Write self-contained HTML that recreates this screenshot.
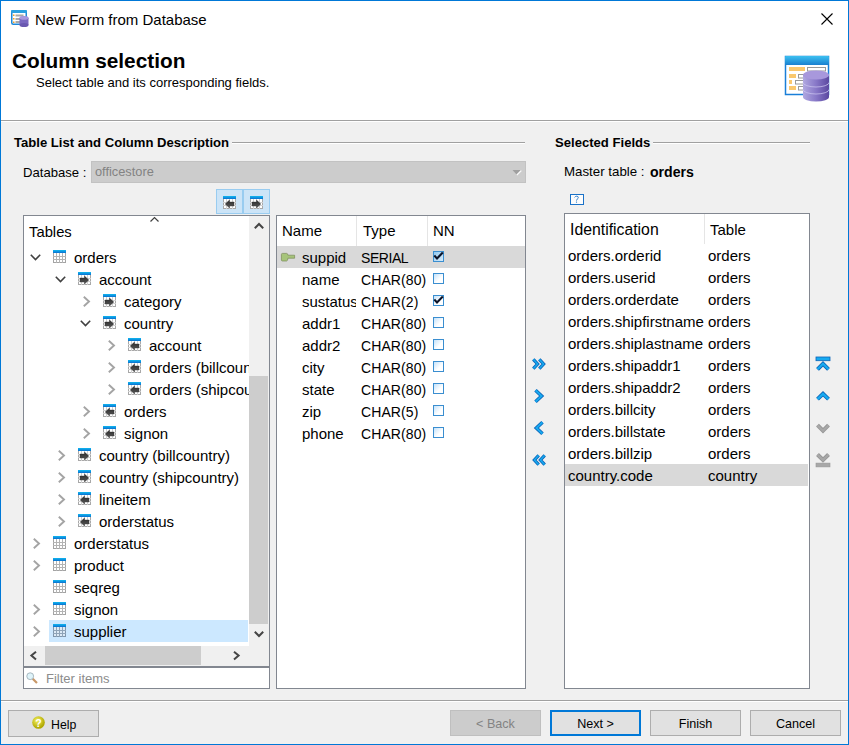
<!DOCTYPE html><html><head><meta charset="utf-8"><style>
*{box-sizing:border-box;margin:0;padding:0}
html,body{width:849px;height:745px;overflow:hidden;background:#f0f0f0}
body{position:relative;font-family:"Liberation Sans",sans-serif;color:#000}
.a{position:absolute}
.t{position:absolute;white-space:nowrap;line-height:1}
.box{position:absolute;background:#fff;border:1px solid #828790}
.btn{position:absolute;top:710px;width:91px;height:26px;background:#e1e1e1;border:1px solid #adadad;font-size:12.6px;text-align:center;line-height:26px}
.r{position:absolute;height:22px;font-size:15px;line-height:24px;white-space:nowrap}
svg{position:absolute;overflow:visible}
</style></head><body>
<svg style="left:0;top:0" width="1" height="1"><defs><linearGradient id="bbar" x1="0" y1="0" x2="0" y2="1"><stop offset="0" stop-color="#10b8f0"/><stop offset="1" stop-color="#0a70d0"/></linearGradient><linearGradient id="agr" x1="0" y1="0" x2="0" y2="1"><stop offset="0" stop-color="#2a2a2a"/><stop offset="1" stop-color="#5a5a5a"/></linearGradient></defs></svg>
<div class="a" style="left:0;top:0;width:849px;height:745px;border:1px solid #0078d7"></div>
<div class="a" style="left:1px;top:1px;width:847px;height:119px;background:#fff"></div>
<svg style="left:11px;top:10px" width="18" height="17" viewBox="0 0 18 17">
<rect x="0.75" y="0.75" width="14.5" height="13.5" rx="1.5" fill="#fff" stroke="#1e88d8" stroke-width="1.5"/>
<rect x="0" y="0" width="16" height="3" rx="1" fill="#2aa0e0"/>
<rect x="2" y="4.5" width="1.5" height="1.5" fill="#f0a020"/><rect x="2" y="8" width="1.5" height="1.5" fill="#f0a020"/><rect x="2" y="11.5" width="1.5" height="1.5" fill="#f0a020"/>
<rect x="4.5" y="4.5" width="8" height="2" fill="#a8a8a8"/><rect x="4.5" y="8" width="5" height="2" fill="#a8a8a8"/><rect x="4.5" y="11" width="5" height="2" fill="#a8a8a8"/>
<ellipse cx="13" cy="8" rx="4.5" ry="2" fill="#9a8ad8"/>
<rect x="8.5" y="8" width="9" height="7" fill="#7a68c0"/>
<ellipse cx="13" cy="15" rx="4.5" ry="2" fill="#6a58b0"/>
<ellipse cx="13" cy="8" rx="4.5" ry="1.8" fill="#a898e0"/>
</svg>
<div class="t" style="left:35px;top:12px;font-size:15px">New Form from Database</div>
<svg style="left:821px;top:13px" width="12" height="12"><path d="M0.5 0.5L11.5 11.5M11.5 0.5L0.5 11.5" stroke="#000" stroke-width="1.1"/></svg>
<div class="t" style="left:12px;top:51px;font-size:20.8px;font-weight:bold">Column selection</div>
<div class="t" style="left:36px;top:76px;font-size:13px">Select table and its corresponding fields.</div>
<svg style="left:785px;top:56px" width="46" height="46" viewBox="0 0 46 46">
<defs>
<linearGradient id="tb" x1="0" y1="0" x2="0" y2="1"><stop offset="0" stop-color="#3cc0f0"/><stop offset="1" stop-color="#1a80d0"/></linearGradient>
<linearGradient id="cyl" x1="0" y1="0" x2="1" y2="0"><stop offset="0" stop-color="#b0a8e0"/><stop offset="0.5" stop-color="#8878c8"/><stop offset="1" stop-color="#5a48a0"/></linearGradient>
</defs>
<rect x="0.5" y="0.5" width="43" height="38" fill="#fff" stroke="#1a7fd8" stroke-width="1.5"/>
<rect x="0" y="0" width="44" height="9" rx="1" fill="url(#tb)"/>
<rect x="4" y="11" width="16" height="4" fill="#f8b030" opacity="0.7"/>
<rect x="22.5" y="11.5" width="18" height="3.5" fill="#fff" stroke="#999"/>
<rect x="4" y="18" width="7" height="4" fill="#f8b030" opacity="0.7"/>
<rect x="13.5" y="18.5" width="8" height="3.5" fill="#fff" stroke="#999"/>
<rect x="4" y="24" width="3" height="4" fill="#f8b030" opacity="0.7"/>
<rect x="10.5" y="24.5" width="8" height="3.5" fill="#fff" stroke="#999"/>
<rect x="4" y="30" width="7" height="4" fill="#f8b030" opacity="0.7"/>
<rect x="13.5" y="30.5" width="8" height="3.5" fill="#fff" stroke="#999"/>
<path d="M18 19 v22 a13 4.5 0 0 0 26 0 v-22 z" fill="url(#cyl)"/>
<ellipse cx="31" cy="19" rx="13" ry="4.5" fill="#a898dc"/>
<path d="M18 26.5 a13 4.5 0 0 0 26 0" fill="none" stroke="#c8c0ee" stroke-width="0.8"/>
<path d="M18 33.5 a13 4.5 0 0 0 26 0" fill="none" stroke="#c8c0ee" stroke-width="0.8"/>
</svg>
<div class="a" style="left:1px;top:120px;width:847px;height:1px;background:#a0a0a0"></div>
<div class="a" style="left:1px;top:121px;width:847px;height:1px;background:#fff"></div>
<div class="t" style="left:14px;top:136px;font-size:13.1px;font-weight:bold">Table List and Column Description</div>
<div class="a" style="left:232px;top:142px;width:293px;height:1px;background:#a0a0a0"></div>
<div class="a" style="left:232px;top:143px;width:293px;height:1px;background:#fff"></div>
<div class="a" style="left:653px;top:143px;width:157px;height:1px;background:#fff"></div>
<div class="t" style="left:555px;top:136px;font-size:13.1px;font-weight:bold">Selected Fields</div>
<div class="a" style="left:653px;top:142px;width:157px;height:1px;background:#a0a0a0"></div>
<div class="t" style="left:23px;top:166px;font-size:13.1px">Database :</div>
<div class="a" style="left:91px;top:161px;width:435px;height:22px;background:#cccccc;border:1px solid #c2c2c2"></div>
<div class="t" style="left:95px;top:166px;font-size:12.8px;color:#838383">officestore</div>
<svg style="left:512px;top:170px" width="10" height="6"><path d="M0.5 0H9.5L5 5z" fill="#a0a0a0"/><path d="M4.8 5L9.3 0.5" stroke="#fafafa" stroke-width="1.2"/></svg>
<div class="t" style="left:564px;top:165px;font-size:13.3px">Master table :</div>
<div class="t" style="left:650px;top:165px;font-size:14.1px;font-weight:bold">orders</div>
<svg style="left:570px;top:194px" width="14" height="11"><rect x="0.5" y="0.5" width="13" height="10" fill="#fcfcfc" stroke="#1a72c8"/><path d="M4.6 3.4Q5.2 2.2 6.7 2.2Q8.3 2.2 8.3 3.6Q8.3 4.5 7.2 5.2Q6.5 5.7 6.5 6.6" fill="none" stroke="#1a72c8" stroke-width="0.9"/><circle cx="6.5" cy="8.1" r="0.65" fill="#1a72c8"/></svg>
<div class="a" style="left:216px;top:189px;width:54px;height:25px;background:#cce4f7;border:1px solid #99ccf0"></div>
<div class="a" style="left:242px;top:190px;width:2px;height:23px;background:#99ccf0"></div>
<svg style="left:223px;top:196px" width="13" height="13" viewBox="0 0 13 13">
<rect x="0.5" y="0.5" width="12" height="12" fill="#fff" stroke="#a8a8a8"/>
<path d="M3.5 3v10M6.5 3v10M9.5 3v10M0 6.5h13M0 9.5h13" stroke="#d0d0d0" stroke-width="1"/>
<rect x="0" y="0" width="13" height="3" fill="url(#bbar)"/>
<path d="M11 6H6.5V4L2.2 8L6.5 12V10H11Z" fill="url(#agr)" stroke="#333" stroke-width="0.4"/>
</svg>
<svg style="left:250px;top:196px" width="13" height="13" viewBox="0 0 13 13">
<rect x="0.5" y="0.5" width="12" height="12" fill="#fff" stroke="#a8a8a8"/>
<path d="M3.5 3v10M6.5 3v10M9.5 3v10M0 6.5h13M0 9.5h13" stroke="#d0d0d0" stroke-width="1"/>
<rect x="0" y="0" width="13" height="3" fill="url(#bbar)"/>
<path d="M2 6H6.5V4L10.8 8L6.5 12V10H2Z" fill="url(#agr)" stroke="#333" stroke-width="0.4"/>
</svg>
<div class="box" style="left:23px;top:215px;width:247px;height:452px"></div>
<div class="box" style="left:23px;top:667px;width:247px;height:22px"></div>
<div class="t" style="left:29px;top:225px;font-size:14.8px">Tables</div>
<svg style="left:150px;top:217px" width="9" height="5"><path d="M0.5 4.5L4.5 0.5L8.5 4.5" fill="none" stroke="#404040" stroke-width="1.2"/></svg>
<div class="a" style="left:24px;top:246px;width:225px;height:400px;overflow:hidden">
<svg style="left:6px;top:8px" width="11" height="7"><path d="M0.8 0.8L5.5 5.5L10.2 0.8" fill="none" stroke="#404040" stroke-width="1.6"/></svg>
<svg style="left:29px;top:4px" width="13" height="13" viewBox="0 0 13 13">
<rect x="0.5" y="0.5" width="12" height="12" fill="#fff" stroke="#a4a4a4"/>
<path d="M3.5 3v10M6.5 3v10M9.5 3v10M0 6.5h13M0 9.5h13" stroke="#b4b4b4" stroke-width="1"/>
<rect x="0" y="0" width="13" height="3" fill="url(#bbar)"/>
</svg>
<div class="r" style="left:50px;top:0px">orders</div>
<svg style="left:31px;top:30px" width="11" height="7"><path d="M0.8 0.8L5.5 5.5L10.2 0.8" fill="none" stroke="#404040" stroke-width="1.6"/></svg>
<svg style="left:54px;top:26px" width="13" height="13" viewBox="0 0 13 13">
<rect x="0.5" y="0.5" width="12" height="12" fill="#fff" stroke="#a8a8a8"/>
<path d="M3.5 3v10M6.5 3v10M9.5 3v10M0 6.5h13M0 9.5h13" stroke="#d0d0d0" stroke-width="1"/>
<rect x="0" y="0" width="13" height="3" fill="url(#bbar)"/>
<path d="M2 6H6.5V4L10.8 8L6.5 12V10H2Z" fill="url(#agr)" stroke="#333" stroke-width="0.4"/>
</svg>
<div class="r" style="left:75px;top:22px">account</div>
<svg style="left:59px;top:50px" width="7" height="12"><path d="M0.8 0.8L6 5.5L0.8 10.2" fill="none" stroke="#a4a4a4" stroke-width="1.9"/></svg>
<svg style="left:79px;top:48px" width="13" height="13" viewBox="0 0 13 13">
<rect x="0.5" y="0.5" width="12" height="12" fill="#fff" stroke="#a8a8a8"/>
<path d="M3.5 3v10M6.5 3v10M9.5 3v10M0 6.5h13M0 9.5h13" stroke="#d0d0d0" stroke-width="1"/>
<rect x="0" y="0" width="13" height="3" fill="url(#bbar)"/>
<path d="M2 6H6.5V4L10.8 8L6.5 12V10H2Z" fill="url(#agr)" stroke="#333" stroke-width="0.4"/>
</svg>
<div class="r" style="left:100px;top:44px">category</div>
<svg style="left:56px;top:74px" width="11" height="7"><path d="M0.8 0.8L5.5 5.5L10.2 0.8" fill="none" stroke="#404040" stroke-width="1.6"/></svg>
<svg style="left:79px;top:70px" width="13" height="13" viewBox="0 0 13 13">
<rect x="0.5" y="0.5" width="12" height="12" fill="#fff" stroke="#a8a8a8"/>
<path d="M3.5 3v10M6.5 3v10M9.5 3v10M0 6.5h13M0 9.5h13" stroke="#d0d0d0" stroke-width="1"/>
<rect x="0" y="0" width="13" height="3" fill="url(#bbar)"/>
<path d="M2 6H6.5V4L10.8 8L6.5 12V10H2Z" fill="url(#agr)" stroke="#333" stroke-width="0.4"/>
</svg>
<div class="r" style="left:100px;top:66px">country</div>
<svg style="left:84px;top:94px" width="7" height="12"><path d="M0.8 0.8L6 5.5L0.8 10.2" fill="none" stroke="#a4a4a4" stroke-width="1.9"/></svg>
<svg style="left:104px;top:92px" width="13" height="13" viewBox="0 0 13 13">
<rect x="0.5" y="0.5" width="12" height="12" fill="#fff" stroke="#a8a8a8"/>
<path d="M3.5 3v10M6.5 3v10M9.5 3v10M0 6.5h13M0 9.5h13" stroke="#d0d0d0" stroke-width="1"/>
<rect x="0" y="0" width="13" height="3" fill="url(#bbar)"/>
<path d="M11 6H6.5V4L2.2 8L6.5 12V10H11Z" fill="url(#agr)" stroke="#333" stroke-width="0.4"/>
</svg>
<div class="r" style="left:125px;top:88px">account</div>
<svg style="left:84px;top:116px" width="7" height="12"><path d="M0.8 0.8L6 5.5L0.8 10.2" fill="none" stroke="#a4a4a4" stroke-width="1.9"/></svg>
<svg style="left:104px;top:114px" width="13" height="13" viewBox="0 0 13 13">
<rect x="0.5" y="0.5" width="12" height="12" fill="#fff" stroke="#a8a8a8"/>
<path d="M3.5 3v10M6.5 3v10M9.5 3v10M0 6.5h13M0 9.5h13" stroke="#d0d0d0" stroke-width="1"/>
<rect x="0" y="0" width="13" height="3" fill="url(#bbar)"/>
<path d="M11 6H6.5V4L2.2 8L6.5 12V10H11Z" fill="url(#agr)" stroke="#333" stroke-width="0.4"/>
</svg>
<div class="r" style="left:125px;top:110px">orders (billcountry)</div>
<svg style="left:84px;top:138px" width="7" height="12"><path d="M0.8 0.8L6 5.5L0.8 10.2" fill="none" stroke="#a4a4a4" stroke-width="1.9"/></svg>
<svg style="left:104px;top:136px" width="13" height="13" viewBox="0 0 13 13">
<rect x="0.5" y="0.5" width="12" height="12" fill="#fff" stroke="#a8a8a8"/>
<path d="M3.5 3v10M6.5 3v10M9.5 3v10M0 6.5h13M0 9.5h13" stroke="#d0d0d0" stroke-width="1"/>
<rect x="0" y="0" width="13" height="3" fill="url(#bbar)"/>
<path d="M11 6H6.5V4L2.2 8L6.5 12V10H11Z" fill="url(#agr)" stroke="#333" stroke-width="0.4"/>
</svg>
<div class="r" style="left:125px;top:132px">orders (shipcountry)</div>
<svg style="left:59px;top:160px" width="7" height="12"><path d="M0.8 0.8L6 5.5L0.8 10.2" fill="none" stroke="#a4a4a4" stroke-width="1.9"/></svg>
<svg style="left:79px;top:158px" width="13" height="13" viewBox="0 0 13 13">
<rect x="0.5" y="0.5" width="12" height="12" fill="#fff" stroke="#a8a8a8"/>
<path d="M3.5 3v10M6.5 3v10M9.5 3v10M0 6.5h13M0 9.5h13" stroke="#d0d0d0" stroke-width="1"/>
<rect x="0" y="0" width="13" height="3" fill="url(#bbar)"/>
<path d="M11 6H6.5V4L2.2 8L6.5 12V10H11Z" fill="url(#agr)" stroke="#333" stroke-width="0.4"/>
</svg>
<div class="r" style="left:100px;top:154px">orders</div>
<svg style="left:59px;top:182px" width="7" height="12"><path d="M0.8 0.8L6 5.5L0.8 10.2" fill="none" stroke="#a4a4a4" stroke-width="1.9"/></svg>
<svg style="left:79px;top:180px" width="13" height="13" viewBox="0 0 13 13">
<rect x="0.5" y="0.5" width="12" height="12" fill="#fff" stroke="#a8a8a8"/>
<path d="M3.5 3v10M6.5 3v10M9.5 3v10M0 6.5h13M0 9.5h13" stroke="#d0d0d0" stroke-width="1"/>
<rect x="0" y="0" width="13" height="3" fill="url(#bbar)"/>
<path d="M11 6H6.5V4L2.2 8L6.5 12V10H11Z" fill="url(#agr)" stroke="#333" stroke-width="0.4"/>
</svg>
<div class="r" style="left:100px;top:176px">signon</div>
<svg style="left:34px;top:204px" width="7" height="12"><path d="M0.8 0.8L6 5.5L0.8 10.2" fill="none" stroke="#a4a4a4" stroke-width="1.9"/></svg>
<svg style="left:54px;top:202px" width="13" height="13" viewBox="0 0 13 13">
<rect x="0.5" y="0.5" width="12" height="12" fill="#fff" stroke="#a8a8a8"/>
<path d="M3.5 3v10M6.5 3v10M9.5 3v10M0 6.5h13M0 9.5h13" stroke="#d0d0d0" stroke-width="1"/>
<rect x="0" y="0" width="13" height="3" fill="url(#bbar)"/>
<path d="M2 6H6.5V4L10.8 8L6.5 12V10H2Z" fill="url(#agr)" stroke="#333" stroke-width="0.4"/>
</svg>
<div class="r" style="left:75px;top:198px">country (billcountry)</div>
<svg style="left:34px;top:226px" width="7" height="12"><path d="M0.8 0.8L6 5.5L0.8 10.2" fill="none" stroke="#a4a4a4" stroke-width="1.9"/></svg>
<svg style="left:54px;top:224px" width="13" height="13" viewBox="0 0 13 13">
<rect x="0.5" y="0.5" width="12" height="12" fill="#fff" stroke="#a8a8a8"/>
<path d="M3.5 3v10M6.5 3v10M9.5 3v10M0 6.5h13M0 9.5h13" stroke="#d0d0d0" stroke-width="1"/>
<rect x="0" y="0" width="13" height="3" fill="url(#bbar)"/>
<path d="M2 6H6.5V4L10.8 8L6.5 12V10H2Z" fill="url(#agr)" stroke="#333" stroke-width="0.4"/>
</svg>
<div class="r" style="left:75px;top:220px">country (shipcountry)</div>
<svg style="left:34px;top:248px" width="7" height="12"><path d="M0.8 0.8L6 5.5L0.8 10.2" fill="none" stroke="#a4a4a4" stroke-width="1.9"/></svg>
<svg style="left:54px;top:246px" width="13" height="13" viewBox="0 0 13 13">
<rect x="0.5" y="0.5" width="12" height="12" fill="#fff" stroke="#a8a8a8"/>
<path d="M3.5 3v10M6.5 3v10M9.5 3v10M0 6.5h13M0 9.5h13" stroke="#d0d0d0" stroke-width="1"/>
<rect x="0" y="0" width="13" height="3" fill="url(#bbar)"/>
<path d="M11 6H6.5V4L2.2 8L6.5 12V10H11Z" fill="url(#agr)" stroke="#333" stroke-width="0.4"/>
</svg>
<div class="r" style="left:75px;top:242px">lineitem</div>
<svg style="left:34px;top:270px" width="7" height="12"><path d="M0.8 0.8L6 5.5L0.8 10.2" fill="none" stroke="#a4a4a4" stroke-width="1.9"/></svg>
<svg style="left:54px;top:268px" width="13" height="13" viewBox="0 0 13 13">
<rect x="0.5" y="0.5" width="12" height="12" fill="#fff" stroke="#a8a8a8"/>
<path d="M3.5 3v10M6.5 3v10M9.5 3v10M0 6.5h13M0 9.5h13" stroke="#d0d0d0" stroke-width="1"/>
<rect x="0" y="0" width="13" height="3" fill="url(#bbar)"/>
<path d="M11 6H6.5V4L2.2 8L6.5 12V10H11Z" fill="url(#agr)" stroke="#333" stroke-width="0.4"/>
</svg>
<div class="r" style="left:75px;top:264px">orderstatus</div>
<svg style="left:9px;top:292px" width="7" height="12"><path d="M0.8 0.8L6 5.5L0.8 10.2" fill="none" stroke="#a4a4a4" stroke-width="1.9"/></svg>
<svg style="left:29px;top:290px" width="13" height="13" viewBox="0 0 13 13">
<rect x="0.5" y="0.5" width="12" height="12" fill="#fff" stroke="#a4a4a4"/>
<path d="M3.5 3v10M6.5 3v10M9.5 3v10M0 6.5h13M0 9.5h13" stroke="#b4b4b4" stroke-width="1"/>
<rect x="0" y="0" width="13" height="3" fill="url(#bbar)"/>
</svg>
<div class="r" style="left:50px;top:286px">orderstatus</div>
<svg style="left:9px;top:314px" width="7" height="12"><path d="M0.8 0.8L6 5.5L0.8 10.2" fill="none" stroke="#a4a4a4" stroke-width="1.9"/></svg>
<svg style="left:29px;top:312px" width="13" height="13" viewBox="0 0 13 13">
<rect x="0.5" y="0.5" width="12" height="12" fill="#fff" stroke="#a4a4a4"/>
<path d="M3.5 3v10M6.5 3v10M9.5 3v10M0 6.5h13M0 9.5h13" stroke="#b4b4b4" stroke-width="1"/>
<rect x="0" y="0" width="13" height="3" fill="url(#bbar)"/>
</svg>
<div class="r" style="left:50px;top:308px">product</div>
<svg style="left:29px;top:334px" width="13" height="13" viewBox="0 0 13 13">
<rect x="0.5" y="0.5" width="12" height="12" fill="#fff" stroke="#a4a4a4"/>
<path d="M3.5 3v10M6.5 3v10M9.5 3v10M0 6.5h13M0 9.5h13" stroke="#b4b4b4" stroke-width="1"/>
<rect x="0" y="0" width="13" height="3" fill="url(#bbar)"/>
</svg>
<div class="r" style="left:50px;top:330px">seqreg</div>
<svg style="left:9px;top:358px" width="7" height="12"><path d="M0.8 0.8L6 5.5L0.8 10.2" fill="none" stroke="#a4a4a4" stroke-width="1.9"/></svg>
<svg style="left:29px;top:356px" width="13" height="13" viewBox="0 0 13 13">
<rect x="0.5" y="0.5" width="12" height="12" fill="#fff" stroke="#a4a4a4"/>
<path d="M3.5 3v10M6.5 3v10M9.5 3v10M0 6.5h13M0 9.5h13" stroke="#b4b4b4" stroke-width="1"/>
<rect x="0" y="0" width="13" height="3" fill="url(#bbar)"/>
</svg>
<div class="r" style="left:50px;top:352px">signon</div>
<div class="a" style="left:25px;top:374px;width:199px;height:22px;background:#cce8ff"></div>
<svg style="left:9px;top:380px" width="7" height="12"><path d="M0.8 0.8L6 5.5L0.8 10.2" fill="none" stroke="#a4a4a4" stroke-width="1.9"/></svg>
<svg style="left:29px;top:378px" width="13" height="13" viewBox="0 0 13 13">
<rect x="0.5" y="0.5" width="12" height="12" fill="#dceaf6" stroke="#7f96ac"/>
<path d="M3.5 3v10M6.5 3v10M9.5 3v10M0 6.5h13M0 9.5h13" stroke="#8fa4b8" stroke-width="1"/>
<rect x="0" y="0" width="13" height="3" fill="url(#bbar)"/>
</svg>
<div class="r" style="left:50px;top:374px">supplier</div>
</div>
<div class="a" style="left:249px;top:216px;width:20px;height:430px;background:#f0f0f0"></div>
<div class="a" style="left:249px;top:376px;width:19px;height:248px;background:#cdcdcd"></div>
<svg style="left:254px;top:223px" width="10" height="6"><path d="M0.8 5.2L5 1L9.2 5.2" fill="none" stroke="#454545" stroke-width="2"/></svg>
<svg style="left:254px;top:631px" width="10" height="6"><path d="M0.8 0.8L5 5L9.2 0.8" fill="none" stroke="#454545" stroke-width="2"/></svg>
<div class="a" style="left:24px;top:646px;width:245px;height:20px;background:#f0f0f0"></div>
<div class="a" style="left:45px;top:646px;width:156px;height:19px;background:#cdcdcd"></div>
<svg style="left:30px;top:651px" width="7" height="10"><path d="M6 0.8L1.4 4.6L6 8.4" fill="none" stroke="#454545" stroke-width="2"/></svg>
<svg style="left:233px;top:651px" width="7" height="10"><path d="M1 0.8L5.6 4.6L1 8.4" fill="none" stroke="#454545" stroke-width="2"/></svg>
<svg style="left:26px;top:672px" width="12" height="12" viewBox="0 0 12 12"><path d="M6.5 6.5L11 11" stroke="#c89868" stroke-width="2.2"/><circle cx="4.2" cy="4.2" r="3.4" fill="#dff4fa" stroke="#a8b8c0" stroke-width="1"/></svg>
<div class="t" style="left:46px;top:672px;font-size:13px;color:#8c8c8c">Filter items</div>
<div class="box" style="left:276px;top:215px;width:250px;height:474px"></div>
<div class="a" style="left:356px;top:216px;width:1px;height:30px;background:#e5e5e5"></div>
<div class="a" style="left:427px;top:216px;width:1px;height:30px;background:#e5e5e5"></div>
<div class="t" style="left:282px;top:223px;font-size:15px">Name</div>
<div class="t" style="left:363px;top:223px;font-size:15px">Type</div>
<div class="t" style="left:433px;top:223px;font-size:15px">NN</div>
<div class="a" style="left:277px;top:246px;width:248px;height:22px;background:#d9d9d9"></div>
<svg style="left:281px;top:253px" width="15" height="9" viewBox="0 0 15 9"><path d="M0.4 1.5Q0.4 0.4 1.5 0.4H5.6Q6.8 0.4 6.9 2.2H13.6V5.2H6.9Q6.8 8 5.6 8H1.5Q0.4 8 0.4 7z" fill="#a6c47a" stroke="#7a8a58" stroke-width="0.7"/></svg>
<div class="r" style="left:302px;top:246px;width:54px;overflow:hidden">suppid</div>
<div class="r" style="left:361px;top:246px;font-size:14px;letter-spacing:-0.45px">SERIAL</div>
<svg style="left:433px;top:251px" width="11" height="11" viewBox="0 0 11 11"><defs><linearGradient id="cb" x1="0" y1="0" x2="1" y2="1"><stop offset="0" stop-color="#c0e0fa"/><stop offset="0.6" stop-color="#fff"/></linearGradient><linearGradient id="cbs" x1="0" y1="0" x2="1" y2="1"><stop offset="0" stop-color="#90c8f0"/><stop offset="1" stop-color="#d8ecfa"/></linearGradient></defs><rect x="0.5" y="0.5" width="10" height="10" fill="url(#cbs)" stroke="#3a8ed0"/><path d="M1.3 4.6L4 7.4L9.8 1.6" fill="none" stroke="#0c1428" stroke-width="2.1"/></svg>
<div class="r" style="left:302px;top:268px;width:54px;overflow:hidden">name</div>
<div class="r" style="left:361px;top:268px;font-size:14px;letter-spacing:0.1px">CHAR(80)</div>
<svg style="left:433px;top:273px" width="11" height="11" viewBox="0 0 11 11"><defs><linearGradient id="cb" x1="0" y1="0" x2="1" y2="1"><stop offset="0" stop-color="#c0e0fa"/><stop offset="0.6" stop-color="#fff"/></linearGradient><linearGradient id="cbs" x1="0" y1="0" x2="1" y2="1"><stop offset="0" stop-color="#90c8f0"/><stop offset="1" stop-color="#d8ecfa"/></linearGradient></defs><rect x="0.5" y="0.5" width="10" height="10" fill="url(#cb)" stroke="#3a8ed0"/></svg>
<div class="r" style="left:302px;top:290px;width:54px;overflow:hidden">sustatus</div>
<div class="r" style="left:361px;top:290px;font-size:14px;letter-spacing:0.1px">CHAR(2)</div>
<svg style="left:433px;top:295px" width="11" height="11" viewBox="0 0 11 11"><defs><linearGradient id="cb" x1="0" y1="0" x2="1" y2="1"><stop offset="0" stop-color="#c0e0fa"/><stop offset="0.6" stop-color="#fff"/></linearGradient><linearGradient id="cbs" x1="0" y1="0" x2="1" y2="1"><stop offset="0" stop-color="#90c8f0"/><stop offset="1" stop-color="#d8ecfa"/></linearGradient></defs><rect x="0.5" y="0.5" width="10" height="10" fill="url(#cb)" stroke="#3a8ed0"/><path d="M1.3 4.6L4 7.4L9.8 1.6" fill="none" stroke="#0c1428" stroke-width="2.1"/></svg>
<div class="r" style="left:302px;top:312px;width:54px;overflow:hidden">addr1</div>
<div class="r" style="left:361px;top:312px;font-size:14px;letter-spacing:0.1px">CHAR(80)</div>
<svg style="left:433px;top:317px" width="11" height="11" viewBox="0 0 11 11"><defs><linearGradient id="cb" x1="0" y1="0" x2="1" y2="1"><stop offset="0" stop-color="#c0e0fa"/><stop offset="0.6" stop-color="#fff"/></linearGradient><linearGradient id="cbs" x1="0" y1="0" x2="1" y2="1"><stop offset="0" stop-color="#90c8f0"/><stop offset="1" stop-color="#d8ecfa"/></linearGradient></defs><rect x="0.5" y="0.5" width="10" height="10" fill="url(#cb)" stroke="#3a8ed0"/></svg>
<div class="r" style="left:302px;top:334px;width:54px;overflow:hidden">addr2</div>
<div class="r" style="left:361px;top:334px;font-size:14px;letter-spacing:0.1px">CHAR(80)</div>
<svg style="left:433px;top:339px" width="11" height="11" viewBox="0 0 11 11"><defs><linearGradient id="cb" x1="0" y1="0" x2="1" y2="1"><stop offset="0" stop-color="#c0e0fa"/><stop offset="0.6" stop-color="#fff"/></linearGradient><linearGradient id="cbs" x1="0" y1="0" x2="1" y2="1"><stop offset="0" stop-color="#90c8f0"/><stop offset="1" stop-color="#d8ecfa"/></linearGradient></defs><rect x="0.5" y="0.5" width="10" height="10" fill="url(#cb)" stroke="#3a8ed0"/></svg>
<div class="r" style="left:302px;top:356px;width:54px;overflow:hidden">city</div>
<div class="r" style="left:361px;top:356px;font-size:14px;letter-spacing:0.1px">CHAR(80)</div>
<svg style="left:433px;top:361px" width="11" height="11" viewBox="0 0 11 11"><defs><linearGradient id="cb" x1="0" y1="0" x2="1" y2="1"><stop offset="0" stop-color="#c0e0fa"/><stop offset="0.6" stop-color="#fff"/></linearGradient><linearGradient id="cbs" x1="0" y1="0" x2="1" y2="1"><stop offset="0" stop-color="#90c8f0"/><stop offset="1" stop-color="#d8ecfa"/></linearGradient></defs><rect x="0.5" y="0.5" width="10" height="10" fill="url(#cb)" stroke="#3a8ed0"/></svg>
<div class="r" style="left:302px;top:378px;width:54px;overflow:hidden">state</div>
<div class="r" style="left:361px;top:378px;font-size:14px;letter-spacing:0.1px">CHAR(80)</div>
<svg style="left:433px;top:383px" width="11" height="11" viewBox="0 0 11 11"><defs><linearGradient id="cb" x1="0" y1="0" x2="1" y2="1"><stop offset="0" stop-color="#c0e0fa"/><stop offset="0.6" stop-color="#fff"/></linearGradient><linearGradient id="cbs" x1="0" y1="0" x2="1" y2="1"><stop offset="0" stop-color="#90c8f0"/><stop offset="1" stop-color="#d8ecfa"/></linearGradient></defs><rect x="0.5" y="0.5" width="10" height="10" fill="url(#cb)" stroke="#3a8ed0"/></svg>
<div class="r" style="left:302px;top:400px;width:54px;overflow:hidden">zip</div>
<div class="r" style="left:361px;top:400px;font-size:14px;letter-spacing:0.1px">CHAR(5)</div>
<svg style="left:433px;top:405px" width="11" height="11" viewBox="0 0 11 11"><defs><linearGradient id="cb" x1="0" y1="0" x2="1" y2="1"><stop offset="0" stop-color="#c0e0fa"/><stop offset="0.6" stop-color="#fff"/></linearGradient><linearGradient id="cbs" x1="0" y1="0" x2="1" y2="1"><stop offset="0" stop-color="#90c8f0"/><stop offset="1" stop-color="#d8ecfa"/></linearGradient></defs><rect x="0.5" y="0.5" width="10" height="10" fill="url(#cb)" stroke="#3a8ed0"/></svg>
<div class="r" style="left:302px;top:422px;width:54px;overflow:hidden">phone</div>
<div class="r" style="left:361px;top:422px;font-size:14px;letter-spacing:0.1px">CHAR(80)</div>
<svg style="left:433px;top:427px" width="11" height="11" viewBox="0 0 11 11"><defs><linearGradient id="cb" x1="0" y1="0" x2="1" y2="1"><stop offset="0" stop-color="#c0e0fa"/><stop offset="0.6" stop-color="#fff"/></linearGradient><linearGradient id="cbs" x1="0" y1="0" x2="1" y2="1"><stop offset="0" stop-color="#90c8f0"/><stop offset="1" stop-color="#d8ecfa"/></linearGradient></defs><rect x="0.5" y="0.5" width="10" height="10" fill="url(#cb)" stroke="#3a8ed0"/></svg>
<svg style="left:529px;top:354px" width="20" height="20"><path d="M4.3 5.3L8.6 10L4.3 14.7M10.3 5.3L14.6 10L10.3 14.7" fill="none" stroke="#0b64b8" stroke-width="3.3" stroke-linejoin="miter"/><path d="M4.3 5.3L8.6 10L4.3 14.7M10.3 5.3L14.6 10L10.3 14.7" fill="none" stroke="#18aaf0" stroke-width="1.5999999999999999" stroke-linejoin="miter"/></svg>
<svg style="left:529px;top:386px" width="20" height="20"><path d="M6.5 4.3L12.6 10L6.5 15.7" fill="none" stroke="#0b64b8" stroke-width="3.6" stroke-linejoin="miter"/><path d="M6.5 4.3L12.6 10L6.5 15.7" fill="none" stroke="#18aaf0" stroke-width="1.9000000000000001" stroke-linejoin="miter"/></svg>
<svg style="left:529px;top:418px" width="20" height="20"><path d="M13.5 4.3L7.4 10L13.5 15.7" fill="none" stroke="#0b64b8" stroke-width="3.6" stroke-linejoin="miter"/><path d="M13.5 4.3L7.4 10L13.5 15.7" fill="none" stroke="#18aaf0" stroke-width="1.9000000000000001" stroke-linejoin="miter"/></svg>
<svg style="left:529px;top:450px" width="20" height="20"><path d="M15.7 5.3L11.4 10L15.7 14.7M9.7 5.3L5.4 10L9.7 14.7" fill="none" stroke="#0b64b8" stroke-width="3.3" stroke-linejoin="miter"/><path d="M15.7 5.3L11.4 10L15.7 14.7M9.7 5.3L5.4 10L9.7 14.7" fill="none" stroke="#18aaf0" stroke-width="1.5999999999999999" stroke-linejoin="miter"/></svg>
<div class="box" style="left:564px;top:213px;width:246px;height:476px"></div>
<div class="a" style="left:704px;top:214px;width:1px;height:30px;background:#e5e5e5"></div>
<div class="t" style="left:570px;top:222px;font-size:15.8px">Identification</div>
<div class="t" style="left:710px;top:222px;font-size:15px">Table</div>
<div class="a" style="left:565px;top:244px;width:139px;height:300px;overflow:hidden">
<div class="r" style="left:3px;top:0px">orders.orderid</div>
<div class="r" style="left:3px;top:22px">orders.userid</div>
<div class="r" style="left:3px;top:44px">orders.orderdate</div>
<div class="r" style="left:3px;top:66px">orders.shipfirstname</div>
<div class="r" style="left:3px;top:88px">orders.shiplastname</div>
<div class="r" style="left:3px;top:110px">orders.shipaddr1</div>
<div class="r" style="left:3px;top:132px">orders.shipaddr2</div>
<div class="r" style="left:3px;top:154px">orders.billcity</div>
<div class="r" style="left:3px;top:176px">orders.billstate</div>
<div class="r" style="left:3px;top:198px">orders.billzip</div>
<div class="a" style="left:0;top:220px;width:139px;height:22px;background:#d9d9d9"></div>
<div class="r" style="left:3px;top:220px">country.code</div>
</div>
<div class="r" style="left:708px;top:244px">orders</div>
<div class="r" style="left:708px;top:266px">orders</div>
<div class="r" style="left:708px;top:288px">orders</div>
<div class="r" style="left:708px;top:310px">orders</div>
<div class="r" style="left:708px;top:332px">orders</div>
<div class="r" style="left:708px;top:354px">orders</div>
<div class="r" style="left:708px;top:376px">orders</div>
<div class="r" style="left:708px;top:398px">orders</div>
<div class="r" style="left:708px;top:420px">orders</div>
<div class="r" style="left:708px;top:442px">orders</div>
<div class="a" style="left:704px;top:464px;width:104px;height:22px;background:#d9d9d9"></div>
<div class="r" style="left:708px;top:464px">country</div>
<svg style="left:816px;top:357px" width="14" height="14"><rect x="0" y="0" width="14" height="3.7" fill="#18aaf0" stroke="#0b64b8" stroke-width="0.8"/><path d="M1.5 12.3L7 6.8L12.5 12.3" fill="none" stroke="#0b64b8" stroke-width="4" stroke-linejoin="miter"/><path d="M1.5 12.3L7 6.8L12.5 12.3" fill="none" stroke="#18aaf0" stroke-width="2.3" stroke-linejoin="miter"/></svg>
<svg style="left:816px;top:391px" width="14" height="10"><path d="M1.5 8.1L7 2.8L12.5 8.1" fill="none" stroke="#0b64b8" stroke-width="4" stroke-linejoin="miter"/><path d="M1.5 8.1L7 2.8L12.5 8.1" fill="none" stroke="#18aaf0" stroke-width="2.3" stroke-linejoin="miter"/></svg>
<svg style="left:816px;top:423px" width="14" height="11"><path d="M1.5 2.2L7 7.7L12.5 2.2" fill="none" stroke="#979797" stroke-width="4" stroke-linejoin="miter"/><path d="M1.5 2.2L7 7.7L12.5 2.2" fill="none" stroke="#a8a8a8" stroke-width="2.3" stroke-linejoin="miter"/></svg>
<svg style="left:816px;top:453px" width="14" height="14"><rect x="0" y="10.1" width="14" height="3.8" fill="#a8a8a8" stroke="#979797" stroke-width="0.6"/><path d="M1.5 1.5L7 7L12.5 1.5" fill="none" stroke="#979797" stroke-width="4" stroke-linejoin="miter"/><path d="M1.5 1.5L7 7L12.5 1.5" fill="none" stroke="#a8a8a8" stroke-width="2.3" stroke-linejoin="miter"/></svg>
<div class="a" style="left:1px;top:700px;width:847px;height:1px;background:#a0a0a0"></div>
<div class="a" style="left:1px;top:701px;width:847px;height:1px;background:#fff"></div>
<div class="btn" style="left:8px;height:27px"></div>
<div class="t" style="left:51px;top:719px;font-size:12.3px">Help</div>
<svg style="left:32px;top:716px" width="13" height="13" viewBox="0 0 13 13"><defs><radialGradient id="hq" cx="0.4" cy="0.35" r="0.6"><stop offset="0" stop-color="#f4f060"/><stop offset="1" stop-color="#b0a800"/></radialGradient></defs><circle cx="6.5" cy="6.5" r="6.3" fill="url(#hq)"/><text x="6.5" y="10.5" font-size="10.5" font-weight="bold" text-anchor="middle" fill="#fff" font-family="Liberation Sans">?</text></svg>
<div class="btn" style="left:450px;background:#cccccc;border-color:#bfbfbf;color:#838383">&lt; Back</div>
<div class="btn" style="left:550px;border:2px solid #0078d7;line-height:24px">Next &gt;</div>
<div class="btn" style="left:650px">Finish</div>
<div class="btn" style="left:750px">Cancel</div>
</body></html>
